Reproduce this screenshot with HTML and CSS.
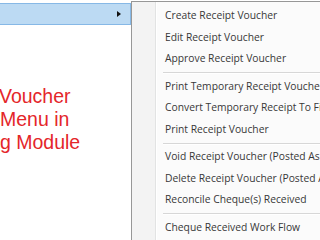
FILE: index.html
```html
<!DOCTYPE html>
<html lang="en">
<head>
    <meta charset="UTF-8">
    <title>Receipt Voucher Menu</title>
    <link rel="stylesheet" href="styles.css">
</head>
<body>
    <div class="screen">
        <!-- Parent menu with the open item -->
        <div class="main-menu">
            <div class="main-item active"><span class="arrow"></span></div>
            <div class="caption">
                <div class="cap-line">Voucher</div>
                <div class="cap-line">Menu in</div>
                <div class="cap-line">g Module</div>
            </div>
        </div>

        <!-- Sub menu -->
        <ul class="submenu">
            <li class="item">Create Receipt Voucher</li>
            <li class="item">Edit Receipt Voucher</li>
            <li class="item">Approve Receipt Voucher</li>
            <li class="sep"></li>
            <li class="item">Print Temporary Receipt Voucher</li>
            <li class="item">Convert Temporary Receipt To Final Receipt</li>
            <li class="item">Print Receipt Voucher</li>
            <li class="sep"></li>
            <li class="item">Void Receipt Voucher (Posted As Final)</li>
            <li class="item">Delete Receipt Voucher (Posted As Temporary)</li>
            <li class="item">Reconcile Cheque(s) Received</li>
            <li class="sep"></li>
            <li class="item">Cheque Received Work Flow</li>
        </ul>
    </div>
</body>
</html>
```

FILE: styles.css
```css
body {
    margin: 0;
    width: 320px;
    height: 240px;
    overflow: hidden;
    background: #fff;
    font-family: "Open Sans", "DejaVu Sans", sans-serif;
}

.screen {
    display: flex;
    height: 240px;
}

.main-menu {
    width: 131px;
    flex: none;
    padding-top: 3px;
}

.main-item {
    height: 20px;
    margin-left: -1px;
    padding-right: 9px;
    display: flex;
    align-items: center;
    justify-content: flex-end;
}

.main-item.active {
    background: #bcdaf3;
    border: 1px solid #86b8e6;
}

.arrow {
    width: 0;
    height: 0;
    border-left: 4px solid #111;
    border-top: 3px solid transparent;
    border-bottom: 3px solid transparent;
}

.caption {
    margin-top: 60px;
    font-family: "Liberation Sans", Arial, sans-serif;
    font-size: 19.5px;
    line-height: 23px;
    color: #e4262a;
    white-space: nowrap;
}

.cap-line:first-child {
    margin-left: -1px;
}

.submenu {
    flex: none;
    width: 240px;
    height: 237px;
    margin: 1px 0 0;
    padding: 3px 0 0;
    list-style: none;
    border: 1px solid #979797;
    border-right: none;
    background: linear-gradient(to right, #f3f3f3 0 23px, #e2e3e3 23px 24px, #fff 24px 25px, #fbfbfb 25px);
    font-size: 10.3px;
    color: #383838;
    overflow: hidden;
}

.item {
    height: 21.5px;
    line-height: 21.5px;
    padding-left: 33px;
    white-space: nowrap;
}

.sep {
    height: 6px;
    margin-left: 31px;
    display: flex;
    align-items: center;
}

.sep::before {
    content: "";
    flex: 1;
    height: 1px;
    background: #d7d7d7;
    box-shadow: 0 1px 0 #fff;
}
```
